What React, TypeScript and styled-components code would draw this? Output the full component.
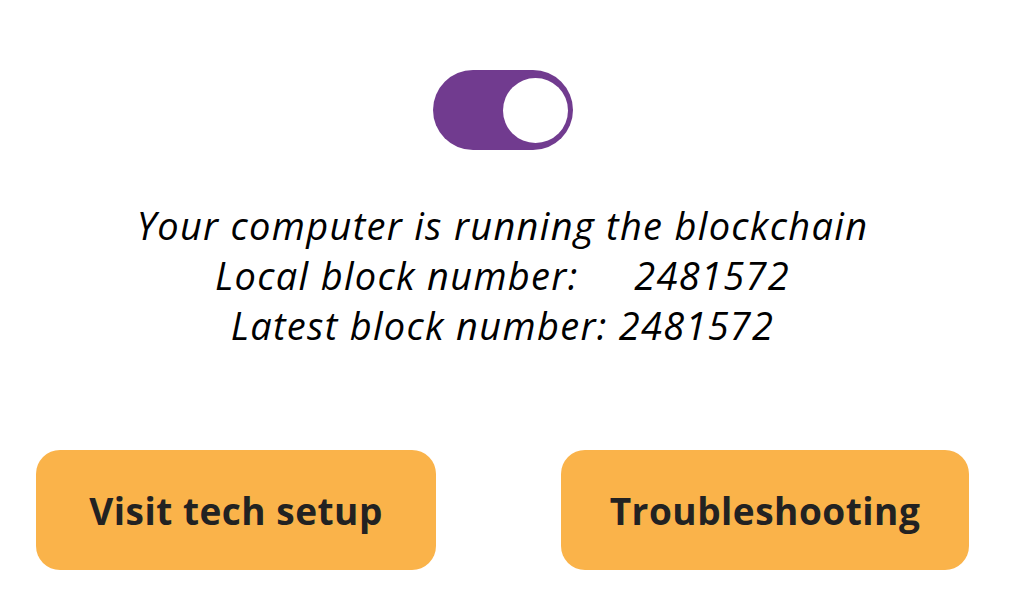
import React from "react";
import styled, { createGlobalStyle } from "styled-components";

const Global = createGlobalStyle`
  html, body { margin: 0; padding: 0; background: #ffffff; }
  body { font-family: "Open Sans", "Noto Sans", sans-serif; }
`;

const Page = styled.div`
  width: 933px;
  margin-left: 36px;
  padding-top: 70px;
  display: flex;
  flex-direction: column;
  align-items: center;
`;

const Toggle = styled.div`
  width: 140px;
  height: 80px;
  border-radius: 40px;
  background: #713b8f;
  display: flex;
  align-items: center;
  justify-content: flex-end;
  padding-right: 5px;
  box-sizing: border-box;
`;

const Knob = styled.div`
  width: 65px;
  height: 65px;
  border-radius: 50%;
  background: #ffffff;
`;

const Status = styled.div`
  margin-top: 50px;
  font-family: "Open Sans", "Noto Sans", sans-serif;
  font-style: italic;
  font-size: 38px;
  letter-spacing: 1.3px;
  line-height: 50px;
  color: #000;
  text-align: center;
  white-space: pre;
`;

const Actions = styled.div`
  margin-top: 100px;
  width: 100%;
  display: flex;
  justify-content: space-between;
`;

const ActionButton = styled.button<{ $w: number }>`
  width: ${(p) => p.$w}px;
  height: 120px;
  border: none;
  border-radius: 24px;
  background: #fab34a;
  color: #222222;
  font-family: "Open Sans", "Noto Sans", sans-serif;
  font-weight: 700;
  font-size: 37px;
  letter-spacing: 0.5px;
  cursor: pointer;
  padding: 0;
`;

export default function App() {
  return (
    <>
      <Global />
      <Page>
        <Toggle>
          <Knob />
        </Toggle>
        <Status>
          {"Your computer is running the blockchain\nLocal block number:     2481572\nLatest block number: 2481572"}
        </Status>
        <Actions>
          <ActionButton $w={400}>Visit tech setup</ActionButton>
          <ActionButton $w={408}>Troubleshooting</ActionButton>
        </Actions>
      </Page>
    </>
  );
}
